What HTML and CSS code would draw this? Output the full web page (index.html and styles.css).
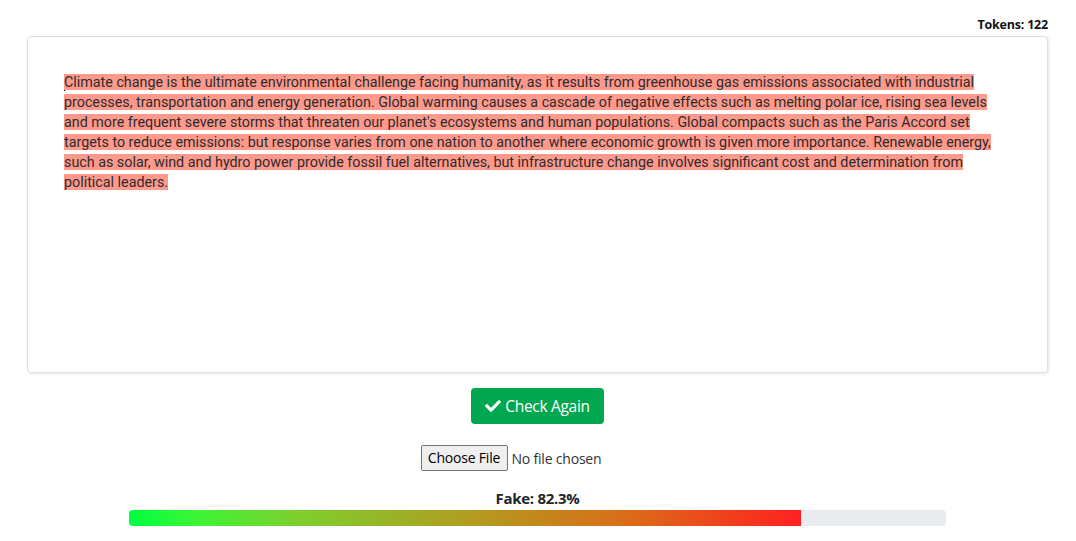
FILE: index.html
```html
<!DOCTYPE html>
<html>
<head>
<meta charset="utf-8">
<link rel="stylesheet" href="styles.css">
</head>
<body>
<div class="page">
  <div class="tokens">Tokens: 122</div>
  <div class="card">
    <div class="editor"><span class="caret"></span><span class="hl">Climate change is the ultimate environmental challenge facing humanity, as it results from greenhouse gas emissions associated with industrial processes, transportation and energy generation. Global warming causes a cascade of negative effects such as melting polar ice, rising sea levels and more frequent severe storms that threaten our planet's ecosystems and human populations. Global compacts such as the Paris Accord set targets to reduce emissions: but response varies from one nation to another where economic growth is given more importance. Renewable energy, such as solar, wind and hydro power provide fossil fuel alternatives, but infrastructure change involves significant cost and determination from political leaders.</span></div>
  </div>
  <div class="actions">
    <button class="btn-check"><svg class="check" viewBox="0 0 512 512" width="16" height="16"><path fill="#fff" d="M173.9 439.4l-166.4-166.4c-10-10-10-26.2 0-36.2l36.2-36.2c10-10 26.2-10 36.2 0L192 312.7 432.1 72.6c10-10 26.2-10 36.2 0l36.2 36.2c10 10 10 26.2 0 36.2L210.1 439.4c-10 10-26.2 10-36.2 0z"/></svg>Check Again</button>
    <div class="file"><span class="file-btn">Choose File</span><span class="file-name">No file chosen</span></div>
    <div class="result">Fake: 82.3%</div>
    <div class="bar"><div class="fill" style="width:82.3%"></div></div>
  </div>
</div>
</body>
</html>
```
FILE: styles.css
```css
* { box-sizing: border-box; }
html, body { margin: 0; padding: 0; background: #fff; }
body { font-family: "Open Sans", "Noto Sans", sans-serif; color: #212529; }
.page { padding: 15px 28px 0 27px; display: flex; flex-direction: column; }
.tokens {
  align-self: flex-end;
  font-size: 12.5px;
  font-weight: 700;
  line-height: 19px;
  height: 21px;
  letter-spacing: -0.2px;
  color: #111;
}
.card {
  height: 337px;
  border: 1px solid #dfdfdf;
  border-radius: 4px;
  box-shadow: 1px 1px 3px rgba(0,0,0,0.10);
  padding: 35px 36px 20px 36px;
}
.editor {
  font-family: Roboto, "Noto Sans", sans-serif;
  font-size: 14.3px;
  line-height: 20px;
  color: #2c2c2c;
}
.caret {
  display: inline-block;
  width: 1px;
  height: 17px;
  background: #000;
  vertical-align: -4px;
  margin-right: -1px;
}
.hl { background: #ff998c; }
.actions { display: flex; flex-direction: column; align-items: center; }
.btn-check {
  margin-top: 15px;
  height: 36px;
  width: 133px;
  border: none;
  border-radius: 4px;
  background: #00a650;
  color: #fff;
  font-family: "Open Sans", "Noto Sans", sans-serif;
  font-size: 15.5px;
  display: flex;
  align-items: center;
  justify-content: center;
  gap: 4px;
  padding: 0;
  letter-spacing: -0.3px;
}
.check { width: 16px; height: 16px; }
.file {
  margin-top: 21px;
  width: 234px;
  display: flex;
  align-items: center;
  font-family: "Open Sans", "Noto Sans", sans-serif;
  font-size: 14px;
  letter-spacing: -0.2px;
}
.file-btn {
  display: inline-block;
  width: 87px;
  text-align: center;
  height: 26px;
  line-height: 24px;
  border: 1px solid #767676;
  border-radius: 2px;
  background: #efefef;
  color: #000;
}
.file-name { margin-left: 4px; color: #333; }
.result {
  margin-top: 17px;
  font-weight: 700;
  font-size: 15px;
  line-height: 20px;
  letter-spacing: -0.3px;
}
.bar {
  margin-top: 2px;
  width: 817px;
  height: 16px;
  border-radius: 4px;
  background: #e9ecef;
  overflow: hidden;
}
.fill {
  height: 100%;
  background: linear-gradient(to right, #00ff40 0%, #3cf535 10%, #7dcf2d 25%, #b09e20 50%, #dc6a18 75%, #ff2020 100%);
}
```
